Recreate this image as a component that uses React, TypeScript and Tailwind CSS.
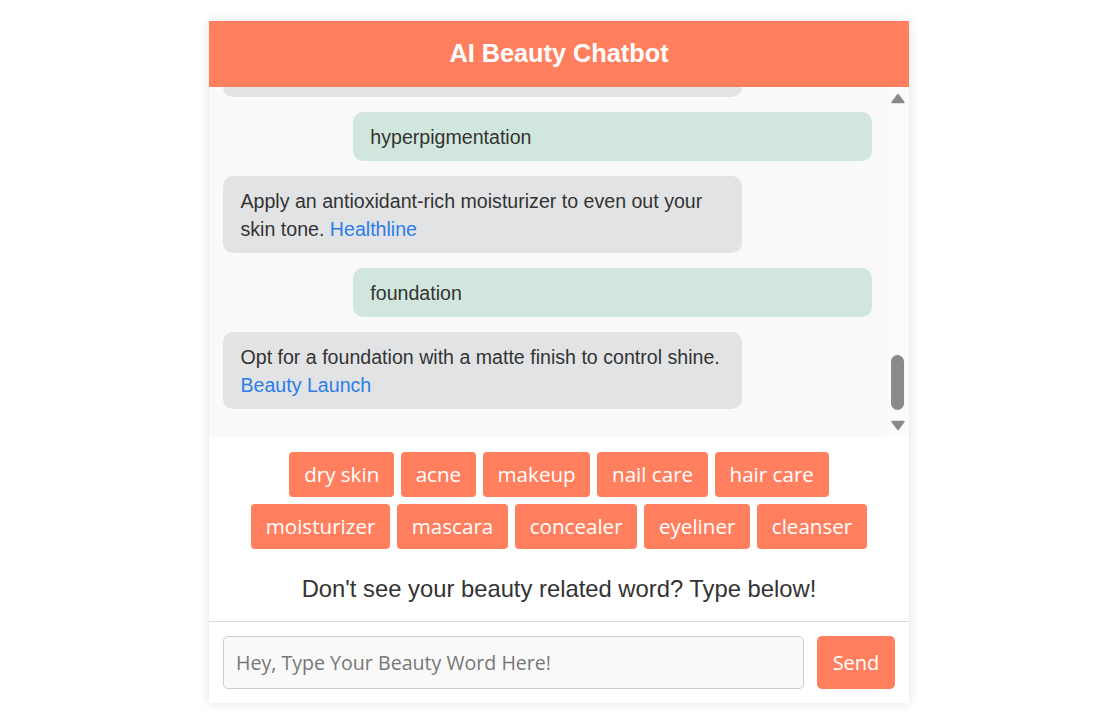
import React, { useEffect, useRef } from "react";

type Msg = { from: "user" | "bot"; text: string; link?: string };

const messages: Msg[] = [
  { from: "user", text: "acne" },
  { from: "bot", text: "Use a gentle cleanser with salicylic acid to keep pores clear.", link: "Healthline" },
  { from: "user", text: "dry skin" },
  { from: "bot", text: "Use a hydrating serum with hyaluronic acid before moisturizing.", link: "Byrdie" },
  { from: "user", text: "hyperpigmentation" },
  { from: "bot", text: "Apply an antioxidant-rich moisturizer to even out your skin tone.", link: "Healthline" },
  { from: "user", text: "foundation" },
  { from: "bot", text: "Opt for a foundation with a matte finish to control shine.", link: "Beauty Launch" },
];

const chipsRow = [
  "dry skin",
  "acne",
  "makeup",
  "nail care",
  "hair care",
  "moisturizer",
  "mascara",
  "concealer",
  "eyeliner",
  "cleanser",
];

export default function App() {
  const ref = useRef<HTMLDivElement>(null);
  useEffect(() => {
    if (ref.current) ref.current.scrollTop = ref.current.scrollHeight;
  }, []);

  return (
    <div className="min-h-screen bg-white pt-[21px]">
      <div className="mx-auto flex w-[700px] flex-col bg-white shadow-[0_0_10px_rgba(0,0,0,0.12)]">
        <div className="flex h-[66px] items-center justify-center bg-[#ff7f5f]">
          <h1 className="text-[25.3px] font-bold text-white [font-family:'Liberation_Sans',Arial,sans-serif]">
            AI Beauty Chatbot
          </h1>
        </div>

        <div className="flex h-[350px] bg-[#f9f9f9]">
          <div
            ref={ref}
            className="flex flex-1 flex-col gap-[15px] overflow-hidden pb-[28px] pl-[14px] pr-[14px] pt-[14px] [font-family:'Liberation_Sans',Arial,sans-serif]"
          >
            {messages.map((m, i) => (
              <div key={i} className={m.from === "user" ? "flex justify-end" : "flex justify-start"}>
                <div
                  className={
                    m.from === "user"
                      ? "w-[80%] shrink-0 rounded-[10px] bg-[#d1e7dd] px-[17.5px] py-[10.5px] text-[19.6px] leading-[28px] text-[#333]"
                      : "w-[80%] shrink-0 rounded-[10px] bg-[#e2e3e5] px-[17.5px] py-[10.5px] text-[19.6px] leading-[28px] text-[#333]"
                  }
                >
                  {m.text}
                  {m.link && (
                    <>
                      {" "}
                      <a href="#" className="text-[#2b7de9]">
                        {m.link}
                      </a>
                    </>
                  )}
                </div>
              </div>
            ))}
          </div>
          <div className="flex w-[23px] shrink-0 flex-col items-center bg-[#fbfbfb] pb-[6px] pt-[6px]">
            <svg width="14" height="11" viewBox="0 0 14 11" className="shrink-0">
              <path d="M7 1.5 L13 9.5 L1 9.5 Z" fill="#8a8a8a" stroke="#8a8a8a" strokeWidth="1.5" strokeLinejoin="round" />
            </svg>
            <div className="flex-1" />
            <div className="h-[55px] w-[13px] rounded-full bg-[#8a8a8a]" />
            <svg width="14" height="11" viewBox="0 0 14 11" className="mt-[10px] shrink-0">
              <path d="M1 1.5 L13 1.5 L7 9.5 Z" fill="#8a8a8a" stroke="#8a8a8a" strokeWidth="1.5" strokeLinejoin="round" />
            </svg>
          </div>
        </div>

        <div className="flex flex-col items-center px-[30px] pb-[15px] pt-[15px]">
          <div className="flex flex-wrap justify-center gap-[7px] [font-family:'Open_Sans',sans-serif]">
            {chipsRow.map((c) => (
              <button
                key={c}
                className="rounded-[4px] bg-[#ff7f5f] px-[14.7px] py-[8px] text-[20.6px] leading-[29px] text-white"
              >
                {c}
              </button>
            ))}
          </div>
          <p className="mt-[22px] text-[23.8px] leading-[35px] text-[#333] [font-family:'Liberation_Sans',Arial,sans-serif]">
            Don't see your beauty related word? Type below!
          </p>
        </div>

        <div className="flex gap-[13px] border-t border-[#dddddd] px-[14px] pb-[14px] pt-[14px]">
          <input
            className="h-[53px] flex-1 rounded-[5px] border border-[#cccccc] bg-[#f9f9f9] px-[12px] text-[19.6px] text-[#333] outline-none placeholder:text-[#777] [font-family:'Open_Sans',sans-serif]"
            placeholder="Hey, Type Your Beauty Word Here!"
          />
          <button className="h-[53px] w-[78px] rounded-[5px] bg-[#ff7f5f] text-[20px] text-white [font-family:'Open_Sans',sans-serif]">
            Send
          </button>
        </div>
      </div>
    </div>
  );
}
